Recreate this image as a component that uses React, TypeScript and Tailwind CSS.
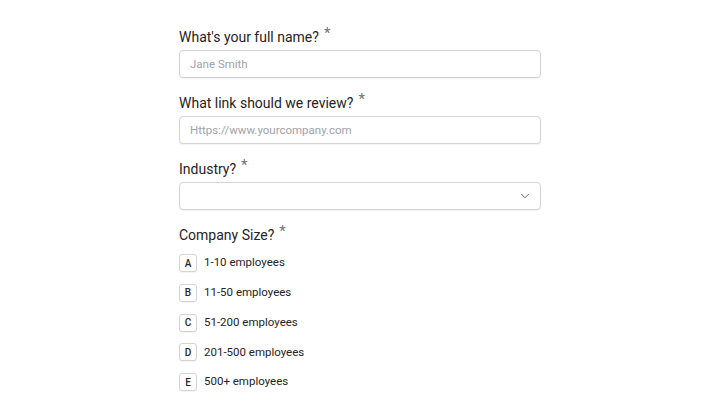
import { ChevronDown } from 'lucide-react';

const sizes = [
  { key: 'A', label: '1-10 employees' },
  { key: 'B', label: '11-50 employees' },
  { key: 'C', label: '51-200 employees' },
  { key: 'D', label: '201-500 employees' },
  { key: 'E', label: '500+ employees' },
];

function Label({ text }: { text: string }) {
  return (
    <label className="flex h-5 items-center text-[14px] leading-5 text-[#1f2328]">
      {text}
      <span className="ml-[5px] -mt-2 text-[15px] text-[#71717a]">*</span>
    </label>
  );
}

function TextField({ label, placeholder }: { label: string; placeholder: string }) {
  return (
    <div className="flex flex-col gap-[3px]">
      <Label text={label} />
      <input
        className="h-7 w-full rounded-[4px] border border-[#d4d4d8] bg-white px-[10px] text-[11.5px] text-[#1f2328] shadow-[0_1px_2px_rgba(0,0,0,0.06)] outline-none placeholder:text-[#a1a1aa]"
        placeholder={placeholder}
      />
    </div>
  );
}

export default function App() {
  return (
    <div className="min-h-screen bg-white font-['Roboto',sans-serif]">
      <div className="mx-auto flex w-[362px] flex-col gap-[15px] pt-[27px]">
        <TextField label="What's your full name?" placeholder="Jane Smith" />
        <TextField label="What link should we review?" placeholder="Https://www.yourcompany.com" />

        <div className="flex flex-col gap-[3px]">
          <Label text="Industry?" />
          <button className="flex h-7 w-full items-center justify-end rounded-[4px] border border-[#d4d4d8] bg-white pr-[8px] shadow-[0_1px_2px_rgba(0,0,0,0.06)]">
            <ChevronDown size={14} strokeWidth={1.5} className="text-[#52525b]" />
          </button>
        </div>

        <div className="flex flex-col gap-[9px]">
          <Label text="Company Size?" />
          <div className="flex flex-col gap-[11.75px]">
            {sizes.map((s) => (
              <div key={s.key} className="flex h-[18px] items-center gap-[7px]">
                <span className="flex h-[18px] w-[18px] items-center justify-center rounded-[3px] border border-[#d4d4d8] bg-white text-[10px] font-medium text-[#27272a] shadow-[0_1px_1px_rgba(0,0,0,0.05)]">
                  {s.key}
                </span>
                <span className="text-[11.5px] text-[#1f2328]">{s.label}</span>
              </div>
            ))}
          </div>
        </div>
      </div>
    </div>
  );
}
